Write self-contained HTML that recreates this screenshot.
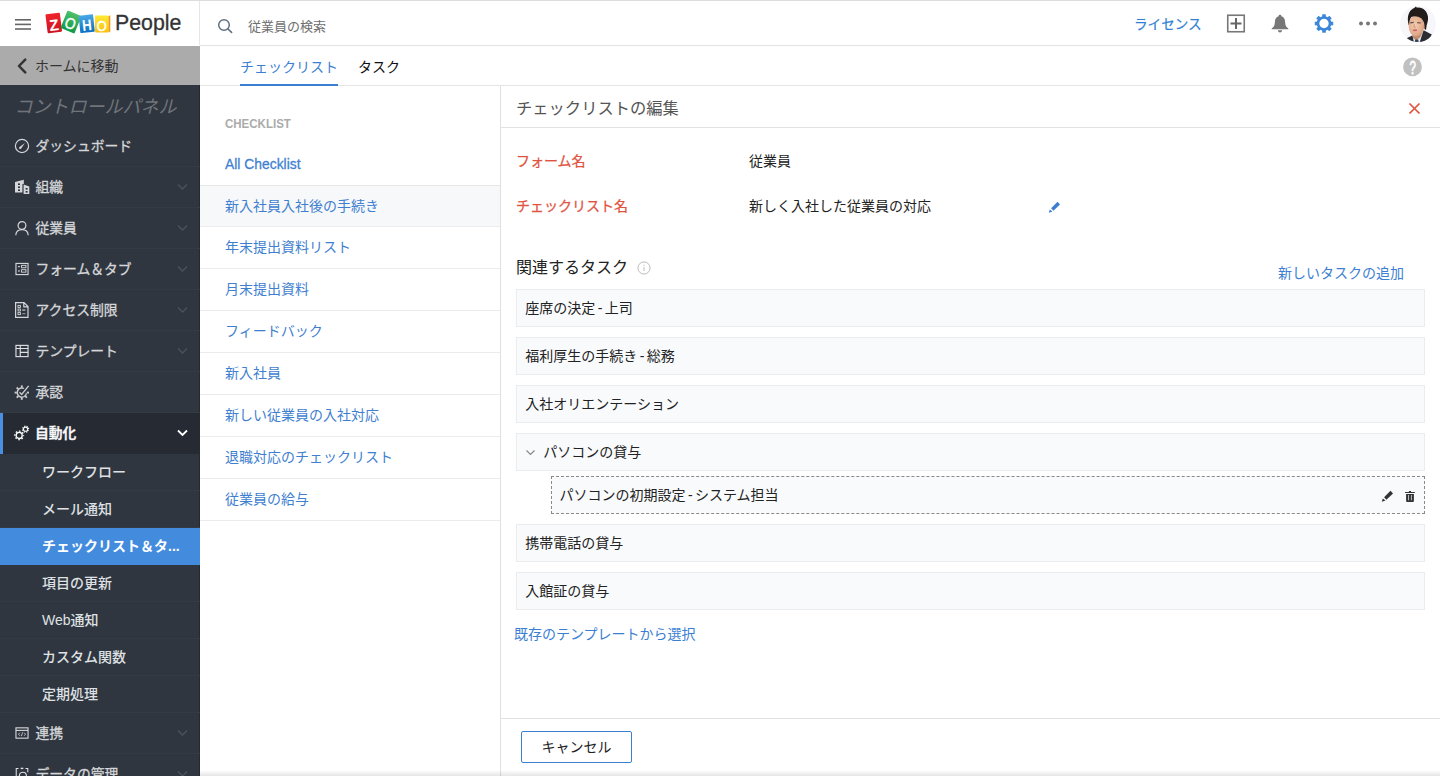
<!DOCTYPE html>
<html lang="ja">
<head>
<meta charset="utf-8">
<title>Zoho People</title>
<style>
*{box-sizing:border-box;margin:0;padding:0}
html,body{width:1440px;height:776px;overflow:hidden;background:#fff}
body{font-family:"Liberation Sans","Noto Sans CJK JP",sans-serif;font-size:14px;color:#222;position:relative}
.abs{position:absolute}
.t{position:absolute;white-space:nowrap;line-height:1}
/* top bar */
#topline{position:absolute;left:0;top:0;width:1440px;height:1px;background:#dcdcdc}
#hdr{position:absolute;left:0;top:1px;width:1440px;height:44px;background:#fff}
#hdrb{position:absolute;left:200px;top:45px;width:1240px;height:1px;background:#e3e3e3}
#hdrv{position:absolute;left:199px;top:1px;width:1px;height:44px;background:#e6e6e6}
/* sidebar */
#side{position:absolute;left:0;top:85px;width:200px;height:691px;background:#30363f;overflow:hidden}
#home{position:absolute;left:0;top:46px;width:200px;height:39px;background:#ababab}
.mi{position:absolute;left:0;width:200px;height:41px;border-bottom:1px solid #353b44}
.mi .lb{position:absolute;left:35.5px;top:1px;line-height:40px;font-size:13.8px;color:#d4d6d9;font-weight:400;-webkit-text-stroke:0.3px #d4d6d9;white-space:nowrap}
.mi svg.ic{position:absolute;left:15px;top:13px;width:14px;height:14px}
.mi svg.ch{position:absolute;left:177px;top:16px}
.si{position:absolute;left:0;width:200px;height:37px;border-bottom:1px solid #353b44}
.si .lb{position:absolute;left:42px;top:0;line-height:36px;font-size:14px;color:#dfe1e4;font-weight:500;white-space:nowrap}
/* middle */
.row{position:absolute;left:200px;width:300px;height:42px;border-bottom:1px solid #ececec}
.row span{position:absolute;left:25px;top:0;line-height:41px;font-size:14px;color:#3f7fd0;white-space:nowrap}
/* right */
.box{position:absolute;left:516px;width:909px;height:38px;border:1px solid #ebecee;background:#f9fafc}
.box span{position:absolute;left:8.3px;top:0;line-height:36px;font-size:14px;color:#222;white-space:nowrap;word-spacing:-1.5px}
</style>
</head>
<body>
<div id="hdr"></div>
<div id="topline"></div>
<div id="hdrb"></div>
<div id="hdrv"></div>

<!-- header content -->
<svg class="abs" style="left:15px;top:18px" width="17" height="13" viewBox="0 0 17 13"><g fill="#666"><rect x="0" y="1" width="16" height="1.6"/><rect x="0" y="5.6" width="16" height="1.6"/><rect x="0" y="10.2" width="16" height="1.6"/></g></svg>
<svg class="abs" style="left:44px;top:8px" width="70" height="28" viewBox="0 0 70 28" font-family="Liberation Sans, sans-serif" font-weight="bold">
 <defs>
  <linearGradient id="gr" x1="0" y1="0" x2="0" y2="1"><stop offset="0" stop-color="#f0232a"/><stop offset="1" stop-color="#cc1422"/></linearGradient>
  <linearGradient id="gg" x1="0" y1="0" x2="0" y2="1"><stop offset="0" stop-color="#4fc06a"/><stop offset="1" stop-color="#0e9a44"/></linearGradient>
  <linearGradient id="gb" x1="0" y1="0" x2="0" y2="1"><stop offset="0" stop-color="#4aa8e8"/><stop offset="1" stop-color="#0b6fc2"/></linearGradient>
  <linearGradient id="gy" x1="0" y1="0" x2="0" y2="1"><stop offset="0" stop-color="#ffe934"/><stop offset="1" stop-color="#fcc20d"/></linearGradient>
 </defs>
 <g transform="rotate(-7 9.5 15)"><rect x="2.5" y="5.5" width="14.5" height="19" rx="1" fill="url(#gr)"/><text x="9.8" y="22.6" font-size="15.5" fill="#fff" text-anchor="middle">Z</text></g>
 <g transform="rotate(22 27 14)"><rect x="19.5" y="4.5" width="15" height="19" rx="1" fill="url(#gg)"/><text x="27" y="21" font-size="15.5" font-weight="normal" stroke="#fff" stroke-width="0.5" fill="#fff" text-anchor="middle" textLength="10.5" lengthAdjust="spacingAndGlyphs">O</text></g>
 <g transform="rotate(-6 42.5 16)"><rect x="35.5" y="7" width="14.5" height="17.5" rx="1" fill="url(#gb)"/><text x="42.9" y="22.5" font-size="15.5" fill="#fff" text-anchor="middle" textLength="9.5" lengthAdjust="spacingAndGlyphs">H</text></g>
 <g><rect x="51" y="7.5" width="13.5" height="17" rx="1" fill="url(#gy)"/><path d="M64.5 8.2 L66.3 7.2 L66.3 23.6 L64.5 24.5 Z" fill="#f39a10"/><text x="57.8" y="22.8" font-size="15.5" font-weight="normal" stroke="#fff" stroke-width="0.5" fill="#fff" text-anchor="middle" textLength="10" lengthAdjust="spacingAndGlyphs">O</text></g>
</svg>
<div class="t" style="left:115px;top:12.7px;font-size:21.3px;color:#333;-webkit-text-stroke:0.3px #333">People</div>
<svg class="abs" style="left:216px;top:17px" width="18" height="18" viewBox="0 0 18 18"><circle cx="8" cy="8" r="5.3" fill="none" stroke="#5f7080" stroke-width="1.5"/><path d="M12 12 L15.6 15.4" stroke="#5f7080" stroke-width="1.6" stroke-linecap="round"/></svg>
<div class="t" style="left:248px;top:19.5px;font-size:13px;color:#6e6e6e">従業員の検索</div>
<div class="t" style="left:1134px;top:18px;font-size:13.6px;color:#2f7fd6;-webkit-text-stroke:0.2px #2f7fd6">ライセンス</div>
<svg class="abs" style="left:1226px;top:14px" width="20" height="20" viewBox="0 0 20 20"><rect x="1.75" y="1.25" width="16.5" height="16.5" fill="none" stroke="#777" stroke-width="1.6"/><path d="M10 4 V15 M4.5 9.5 H15.5" stroke="#666" stroke-width="2"/></svg>
<svg class="abs" style="left:1270px;top:14px" width="20" height="20" viewBox="0 0 20 20"><path d="M10 0.8 c0.9 0 1.4 0.6 1.4 1.4 c2.6 0.8 3.7 3 3.7 5.6 c0 3.6 1 5.2 3.2 6.6 v0.9 H1.7 v-0.9 c2.2-1.4 3.2-3 3.2-6.6 c0-2.6 1.1-4.8 3.7-5.6 c0-0.8 0.5-1.4 1.4-1.4z M7.9 16.2 h4.2 c0 1.3-0.9 2.2-2.1 2.2 s-2.1-0.9-2.1-2.2z" fill="#777"/></svg>
<svg class="abs" style="left:1314px;top:13px" width="20" height="20" viewBox="0 0 20 20"><g transform="translate(10 10.5)"><circle r="6" fill="none" stroke="#3b86d8" stroke-width="2.6"/><g fill="#3b86d8"><rect x="-1.8" y="-9.2" width="3.6" height="3.4"/><rect x="-1.8" y="5.8" width="3.6" height="3.4"/><rect x="-9.2" y="-1.8" width="3.4" height="3.6"/><rect x="5.8" y="-1.8" width="3.4" height="3.6"/><g transform="rotate(45)"><rect x="-1.8" y="-9.2" width="3.6" height="3.4"/><rect x="-1.8" y="5.8" width="3.6" height="3.4"/><rect x="-9.2" y="-1.8" width="3.4" height="3.6"/><rect x="5.8" y="-1.8" width="3.4" height="3.6"/></g></g></g></svg>
<svg class="abs" style="left:1358px;top:20px" width="20" height="7" viewBox="0 0 20 7"><g fill="#777"><circle cx="3" cy="3.5" r="2"/><circle cx="10" cy="3.5" r="2"/><circle cx="17" cy="3.5" r="2"/></g></svg>
<svg class="abs" style="left:1400px;top:6px" width="36" height="36" viewBox="0 0 36 36">
 <defs><clipPath id="av"><circle cx="18" cy="18" r="18"/></clipPath>
 <radialGradient id="fc" cx="0.42" cy="0.45" r="0.65"><stop offset="0" stop-color="#f3cdb3"/><stop offset="0.7" stop-color="#e2ac8c"/><stop offset="1" stop-color="#c98e6e"/></radialGradient></defs>
 <g clip-path="url(#av)"><rect width="36" height="36" fill="#f7f7fb"/>
 <path d="M11 29 L24 24 L27 36 L11 36 Z" fill="#e4e9ee"/>
 <path d="M12.5 27 L22.5 26 L20.5 31 L16.5 34.5 L13 32 Z" fill="#c48a6b"/>
 <path d="M23.6 24.3 L31.8 28.6 Q30.5 33 22 36.5 L19.6 36.5 Z" fill="#2b2d34"/>
 <path d="M6 32.4 L12.4 29.4 L14 37 Q9 36 6 32.4 Z" fill="#2b2d34"/>
 <path d="M15.2 33.6 L18.2 33.4 L18.8 37 L14.6 37 Z" fill="#34405a"/>
 <ellipse cx="24.6" cy="20.8" rx="1.6" ry="2.6" fill="#d9a282"/>
 <ellipse cx="16.3" cy="20" rx="7.7" ry="10.6" fill="url(#fc)"/>
 <path d="M8.7 19 C6.2 10 9.5 3.6 14.6 1.8 L15.8 0.4 L17 1.7 C22.5 0.8 27.4 5 28 11 C28.3 14.2 27.4 17 26.6 19.4 L26 24.2 L24.6 22.6 C24.8 18.4 24 15 21.2 12.2 C18.2 10 14 9.6 11.4 11 C9.8 12.6 9.4 15.4 9 19 Z" fill="#221c1a"/>
 <path d="M10.2 16.8 L13.8 16.4 M17.2 16.6 L20.8 17" stroke="#4a3428" stroke-width="1.2" fill="none" opacity="0.8"/>
 <path d="M14.4 18 L13.8 21 L15.8 21.2" stroke="#c28c6e" stroke-width="0.8" fill="none"/>
 <ellipse cx="15" cy="24.2" rx="2.3" ry="1" fill="#c9656b"/>
 </g></svg>
<svg class="abs" style="left:1402px;top:57px" width="21" height="20" viewBox="0 0 21 20"><circle cx="10.5" cy="9.9" r="9.4" fill="#c0c0c0"/><text x="10.7" y="16.6" font-size="18" font-family="Liberation Sans, sans-serif" fill="#fff" stroke="#fff" stroke-width="0.8" text-anchor="middle" textLength="6.4" lengthAdjust="spacingAndGlyphs">?</text></svg>
<div id="home"><svg class="abs" style="left:16px;top:12px" width="12" height="16" viewBox="0 0 12 16"><path d="M9.2 1.6 L3 8 L9.2 14.4" fill="none" stroke="#333" stroke-width="2.5" stroke-linecap="round" stroke-linejoin="round"/></svg><div class="t" style="left:35px;top:13px;font-size:14px;color:#333">ホームに移動</div></div>
<div id="side">
<div style="position:absolute;left:199px;top:0;width:1px;height:691px;background:#252a31"></div>
<div class="t" style="left:14.5px;top:13px;font-size:18px;font-style:italic;color:#70757c">コントロールパネル</div>
<div class="mi" style="top:41px"><svg class="ic" style="overflow:visible" width="14" height="14" viewBox="0 0 14 14"><circle cx="7" cy="7" r="6.6" fill="none" stroke="#d4d6d9" stroke-width="1.2"/><path d="M9.9 4.1 L4.6 7.9 A1.15 1.15 0 1 0 6.2 9.5 Z" fill="#d4d6d9"/></svg><span class="lb">ダッシュボード</span></div>
<div class="mi" style="top:82px"><svg class="ic" style="overflow:visible" width="14" height="14" viewBox="0 0 14 14"><path d="M0 2 L8.8 -0.3 V4 H7.4 V12.5 H0 Z" fill="#d4d6d9"/><path d="M8.6 4.6 L14.3 6.5 V14 H8.6 Z" fill="#d4d6d9"/><g fill="#2f363f"><rect x="3" y="3.4" width="2" height="1.6"/><rect x="3" y="6.4" width="2" height="1.6"/><rect x="3" y="9.4" width="2" height="1.6"/><rect x="10.6" y="8" width="2" height="1.6"/><rect x="10.6" y="11" width="2" height="1.6"/></g></svg><span class="lb">組織</span><svg class="ch" width="11" height="8" viewBox="0 0 11 8"><path d="M1 1.5 L5.5 6 L10 1.5" fill="none" stroke="#4a525d" stroke-width="1.4"/></svg></div>
<div class="mi" style="top:123px"><svg class="ic" style="overflow:visible" width="14" height="14" viewBox="0 0 14 14"><circle cx="7" cy="4.5" r="3.9" fill="none" stroke="#d4d6d9" stroke-width="1.2"/><path d="M0.8 14.2 C1 10.2 3.8 8.6 7 8.6 C10.2 8.6 13 10.2 13.2 14.2" fill="none" stroke="#d4d6d9" stroke-width="1.2"/></svg><span class="lb">従業員</span><svg class="ch" width="11" height="8" viewBox="0 0 11 8"><path d="M1 1.5 L5.5 6 L10 1.5" fill="none" stroke="#4a525d" stroke-width="1.4"/></svg></div>
<div class="mi" style="top:164px"><svg class="ic" width="16" height="16" viewBox="0 0 16 16"><rect x="1.1" y="1.6" width="13.8" height="12.8" fill="none" stroke="#dfe1e4" stroke-width="1.2"/><g fill="#dfe1e4"><rect x="3.5" y="4.6" width="2" height="1.3"/><rect x="3.5" y="9.6" width="2" height="1.3"/></g><g fill="none" stroke="#dfe1e4" stroke-width="1"><rect x="7.5" y="3.8" width="5" height="2.8"/><rect x="7.5" y="8.8" width="5" height="2.8"/></g></svg><span class="lb">フォーム＆タブ</span><svg class="ch" width="11" height="8" viewBox="0 0 11 8"><path d="M1 1.5 L5.5 6 L10 1.5" fill="none" stroke="#4a525d" stroke-width="1.4"/></svg></div>
<div class="mi" style="top:205px"><svg class="ic" style="overflow:visible;top:12px;height:16px" width="14" height="16" viewBox="0 0 14 16"><path d="M0.6 0.6 H9 L13 4.6 V15.4 H0.6 Z M8.8 0.8 V4.8 H12.8" fill="none" stroke="#d4d6d9" stroke-width="1.2"/><g fill="none" stroke="#d4d6d9" stroke-width="0.9"><rect x="3" y="3.4" width="2.4" height="2"/><rect x="3" y="7" width="2.4" height="2"/><rect x="3" y="10.6" width="2.4" height="2"/></g><g fill="#d4d6d9"><rect x="7.2" y="7.5" width="3.2" height="1.1"/><rect x="7.2" y="11.1" width="3.2" height="1.1" opacity="0.6"/></g></svg><span class="lb">アクセス制限</span><svg class="ch" width="11" height="8" viewBox="0 0 11 8"><path d="M1 1.5 L5.5 6 L10 1.5" fill="none" stroke="#4a525d" stroke-width="1.4"/></svg></div>
<div class="mi" style="top:246px"><svg class="ic" width="16" height="16" viewBox="0 0 16 16"><rect x="1.1" y="1.6" width="13.8" height="12.8" fill="none" stroke="#dfe1e4" stroke-width="1.3"/><path d="M1 5.2 H15 M6 1.6 V14.4 M6 9.6 H15" stroke="#dfe1e4" stroke-width="1.3" fill="none"/></svg><span class="lb">テンプレート</span><svg class="ch" width="11" height="8" viewBox="0 0 11 8"><path d="M1 1.5 L5.5 6 L10 1.5" fill="none" stroke="#4a525d" stroke-width="1.4"/></svg></div>
<div class="mi" style="top:287px"><svg class="ic" style="overflow:visible" width="14" height="14" viewBox="0 0 14 14"><path d="M11.4 8.4 A4.6 4.6 0 1 1 9 3.5" fill="none" stroke="#c9cbce" stroke-width="1.4"/><g stroke="#c9cbce" stroke-width="1.9" fill="none"><path d="M6.8 0.4 V2.6"/><path d="M6.8 12.6 V14.8"/><path d="M-0.4 7.6 H1.8"/><path d="M11.8 7.6 H14"/><path d="M1.7 2.5 L3.3 4.1"/><path d="M1.7 12.7 L3.3 11.1"/><path d="M11.9 12.7 L10.3 11.1"/></g><path d="M4.5 7.3 L6.7 9.4 L13.6 0.9" fill="none" stroke="#c9cbce" stroke-width="1.4"/></svg><span class="lb">承認</span></div>
<div class="mi" style="top:328px;background:#262b33;border-left:3px solid #4a90e2;border-bottom:0"><span style="position:absolute;left:-3px;top:0"><svg class="ic" style="overflow:visible" width="14" height="14" viewBox="0 0 14 14"><circle cx="4.2" cy="9.4" r="3.0" fill="none" stroke="#fff" stroke-width="1.3"/><circle cx="4.2" cy="9.4" r="4.3" fill="none" stroke="#fff" stroke-width="1.3" stroke-dasharray="1.689 1.689" stroke-dashoffset="0.844" transform="rotate(0 4.2 9.4)"/><circle cx="10.6" cy="3.2" r="2.1" fill="none" stroke="#fff" stroke-width="1.1"/><circle cx="10.6" cy="3.2" r="3.1" fill="none" stroke="#fff" stroke-width="1.0" stroke-dasharray="1.217 1.217" stroke-dashoffset="0.609" transform="rotate(22.5 10.6 3.2)"/></svg></span><span class="lb" style="left:32px;color:#fff;font-weight:700">自動化</span><span style="position:absolute;left:-3px;top:0"><svg class="ch" width="11" height="8" viewBox="0 0 11 8"><path d="M1 1.5 L5.5 6 L10 1.5" fill="none" stroke="#fff" stroke-width="1.8"/></svg></span></div>
<div class="si" style="top:369px"><span class="lb">ワークフロー</span></div>
<div class="si" style="top:406px"><span class="lb">メール通知</span></div>
<div class="si" style="top:443px;background:#428bdd;border-bottom-color:#428bdd"><span class="lb" style="color:#fff;font-weight:700">チェックリスト＆タ...</span></div>
<div class="si" style="top:480px"><span class="lb">項目の更新</span></div>
<div class="si" style="top:517px"><span class="lb">Web通知</span></div>
<div class="si" style="top:554px"><span class="lb">カスタム関数</span></div>
<div class="si" style="top:591px"><span class="lb">定期処理</span></div>
<div class="mi" style="top:628px"><svg class="ic" width="16" height="16" viewBox="0 0 16 16"><rect x="1.1" y="2.1" width="13.8" height="11.8" fill="none" stroke="#dfe1e4" stroke-width="1.2"/><path d="M1 5 H15" stroke="#dfe1e4" stroke-width="1.2"/><path d="M5.6 7.6 L4 9.4 L5.6 11.2 M10.4 7.6 L12 9.4 L10.4 11.2 M8.7 7.2 L7.3 11.6" stroke="#dfe1e4" stroke-width="0.9" fill="none"/></svg><span class="lb">連携</span><svg class="ch" width="11" height="8" viewBox="0 0 11 8"><path d="M1 1.5 L5.5 6 L10 1.5" fill="none" stroke="#4a525d" stroke-width="1.4"/></svg></div>
<div class="mi" style="top:669px"><svg class="ic" width="16" height="16" viewBox="0 0 16 16"><path d="M1.4 15 V1.6 H4 M12 1.6 H14.6 V6" fill="none" stroke="#dfe1e4" stroke-width="1.2"/><circle cx="9" cy="10" r="4" fill="none" stroke="#dfe1e4" stroke-width="1.3"/><path d="M6.5 1.6 H9.5" stroke="#dfe1e4" stroke-width="1.6"/></svg><span class="lb">データの管理</span><svg class="ch" width="11" height="8" viewBox="0 0 11 8"><path d="M1 1.5 L5.5 6 L10 1.5" fill="none" stroke="#4a525d" stroke-width="1.4"/></svg></div>
</div>

<!-- tab bar -->
<div class="abs" style="left:200px;top:85px;width:1240px;height:1px;background:#e4e4e4"></div>
<div class="t" style="left:240px;top:60px;font-size:14px;color:#3c7fd2">チェックリスト</div>
<div class="abs" style="left:240px;top:84px;width:98px;height:2px;background:#3c7fd2"></div>
<div class="t" style="left:358px;top:60px;font-size:14px;color:#111">タスク</div>
<!-- list -->
<div class="t" style="left:225px;top:117.3px;font-size:13px;color:#ababab;font-weight:bold;transform:scaleX(0.885);transform-origin:0 0">CHECKLIST</div>
<div class="t" style="left:225px;top:156px;font-size:15px;color:#3f7fd0;-webkit-text-stroke:0.3px #3f7fd0;transform:scaleX(0.925);transform-origin:0 0">All Checklist</div>
<div class="abs" style="left:200px;top:185px;width:300px;height:1px;background:#e6e6e6"></div>
<div class="row" style="top:186px;height:41px;background:#f7f8fa"><span style="line-height:40px">新入社員入社後の手続き</span></div>
<div class="row" style="top:227px;height:42px"><span style="line-height:41px">年末提出資料リスト</span></div>
<div class="row" style="top:269px;height:42px"><span style="line-height:41px">月末提出資料</span></div>
<div class="row" style="top:311px;height:42px"><span style="line-height:41px">フィードバック</span></div>
<div class="row" style="top:353px;height:42px"><span style="line-height:41px">新入社員</span></div>
<div class="row" style="top:395px;height:42px"><span style="line-height:41px">新しい従業員の入社対応</span></div>
<div class="row" style="top:437px;height:42px"><span style="line-height:41px">退職対応のチェックリスト</span></div>
<div class="row" style="top:479px;height:42px"><span style="line-height:41px">従業員の給与</span></div>

<div class="abs" style="left:500px;top:86px;width:1px;height:690px;background:#e0e0e0"></div>

<!-- right panel -->
<div class="t" style="left:516px;top:100px;font-size:16.3px;color:#555">チェックリストの編集</div>
<svg class="abs" style="left:1408px;top:102px" width="13" height="13" viewBox="0 0 13 13"><path d="M1.5 1.5 L11.5 11.5 M11.5 1.5 L1.5 11.5" stroke="#e0533f" stroke-width="1.7" fill="none"/></svg>
<div class="abs" style="left:501px;top:127px;width:939px;height:1px;background:#e2e2e2"></div>
<div class="t" style="left:516px;top:154px;font-size:14px;color:#e0533f;-webkit-text-stroke:0.25px #e0533f">フォーム名</div>
<div class="t" style="left:749px;top:154px;font-size:14px;color:#222">従業員</div>
<div class="t" style="left:516px;top:199px;font-size:14px;color:#e0533f;-webkit-text-stroke:0.25px #e0533f">チェックリスト名</div>
<div class="t" style="left:749px;top:199px;font-size:14px;color:#222">新しく入社した従業員の対応</div>
<svg class="abs" style="left:1048px;top:201px" width="13" height="13" viewBox="0 0 13 13"><path d="M3.1 7.3 L9.5 0.8 L12 3.4 L5.4 9.8 Z M0.8 11.8 L1.8 8.4 L4.5 10.6 Z" fill="#3c7fd2"/></svg>
<div class="t" style="left:516px;top:260px;font-size:16px;color:#222">関連するタスク</div>
<svg class="abs" style="left:637px;top:261px;overflow:visible" width="14" height="14" viewBox="0 0 14 14"><circle cx="7" cy="7" r="6.1" fill="none" stroke="#bdbdbd" stroke-width="1"/><rect x="6.5" y="6" width="1" height="4" fill="#bbb"/><rect x="6.5" y="3.8" width="1" height="1.2" fill="#bbb"/></svg>
<div class="t" style="right:36px;top:266px;font-size:14px;color:#3c7fd2">新しいタスクの追加</div>
<div class="box" style="top:289px"><span>座席の決定 - 上司</span></div>
<div class="box" style="top:337px"><span>福利厚生の手続き - 総務</span></div>
<div class="box" style="top:385px"><span>入社オリエンテーション</span></div>
<div class="box" style="top:433px"><svg class="abs" style="left:8px;top:15px" width="11" height="8" viewBox="0 0 11 8"><path d="M1.5 1.5 L5.5 5.5 L9.5 1.5" fill="none" stroke="#888" stroke-width="1.2"/></svg><span style="left:26.3px">パソコンの貸与</span></div>
<div class="box" style="top:476px;left:551px;width:874px;border:1px dashed #8a8a8a"><span style="left:7.5px">パソコンの初期設定 - システム担当</span>
<svg class="abs" style="left:829.2px;top:13.2px" width="13" height="13" viewBox="0 0 13 13"><path d="M3.1 7.3 L9.5 0.8 L12 3.4 L5.4 9.8 Z M0.8 11.8 L1.8 8.4 L4.5 10.6 Z" fill="#333"/></svg>
<svg class="abs" style="left:853px;top:14px" width="10" height="11" viewBox="0 0 10 11"><path d="M0.1 0.9 H9.8 V2 H0.1 Z M3.9 0 H6 V1 H3.9 Z M1.1 3 H8.9 V9.9 Q8.9 10.9 7.9 10.9 H2.1 Q1.1 10.9 1.1 9.9 Z" fill="#333"/><g fill="#c9cacc"><rect x="3.1" y="4" width="0.9" height="5.3"/><rect x="5.9" y="4" width="0.9" height="5.3"/></g></svg>
</div>
<div class="box" style="top:524px"><span>携帯電話の貸与</span></div>
<div class="box" style="top:572px"><span>入館証の貸与</span></div>

<div class="t" style="left:514px;top:627px;font-size:14px;color:#3c7fd2">既存のテンプレートから選択</div>
<div class="abs" style="left:501px;top:718px;width:939px;height:1px;background:#e2e2e2"></div>
<div class="abs" style="left:521px;top:731px;width:111px;height:32px;border:1px solid #3c7fd2;border-radius:2px;background:#fff;text-align:center;line-height:30px;font-size:14px;color:#222">キャンセル</div>
<div class="abs" style="left:200px;top:770px;width:1240px;height:6px;background:linear-gradient(to bottom,rgba(0,0,0,0),rgba(0,0,0,0.10))"></div>
</body>
</html>
